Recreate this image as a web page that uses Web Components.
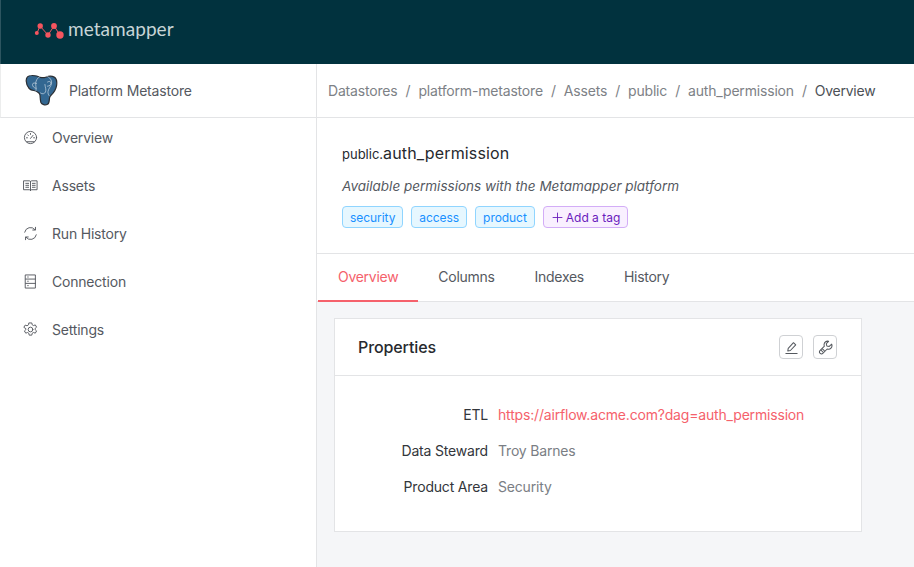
<!DOCTYPE html>
<html>
<head>
<meta charset="utf-8">
<title>Metamapper</title>
<style>
  html, body { margin: 0; height: 100%; overflow: hidden; }
  body { font-family: Inter, "Liberation Sans", sans-serif; font-size: 14px; letter-spacing: -.18px; color: #55595f; background: #fff; }
</style>
</head>
<body>
<app-shell>
  <top-bar slot="top"></top-bar>
  <side-bar slot="side">
    <nav-item label="Overview" icon="gauge"></nav-item>
    <nav-item label="Assets" icon="book"></nav-item>
    <nav-item label="Run History" icon="sync"></nav-item>
    <nav-item label="Connection" icon="list"></nav-item>
    <nav-item label="Settings" icon="gear"></nav-item>
  </side-bar>
  <bread-crumbs slot="main"></bread-crumbs>
  <asset-header slot="main"></asset-header>
  <tab-bar slot="main"></tab-bar>
  <properties-card slot="main">
    <prop-row label="ETL"><a href="#">https://airflow.acme.com?dag=auth_permission</a></prop-row>
    <prop-row label="Data Steward">Troy Barnes</prop-row>
    <prop-row label="Product Area">Security</prop-row>
  </properties-card>
</app-shell>

<script>
const icons = {
  gauge: '<circle cx="8" cy="8" r="6.500"/><path d="M8 9l2.700-3.300M3.700 8.300h1M11.300 8.300h1M8 3.700v1M5 5.200l.7.7M4 12.500h8"/>',
  book: '<path d="M1 3h5.800c.6 0 1.200.3 1.200.9 0-.6.6-.9 1.200-.9H15v9.500H9.200c-.6 0-1.200.3-1.200.9 0-.6-.6-.9-1.200-.9H1zM8 3.900v9.500M3 5.700h3M3 7.800h3M3 9.900h3M10 5.700h3M10 7.800h3M10 9.900h3"/>',
  sync: '<path d="M1.800 6.600A6.300 6.300 0 0 1 12.800 3.900M14.200 9.400A6.300 6.300 0 0 1 3.200 12.100"/><path d="M13.300 1.400v2.900h-2.900M2.700 14.600v-2.900h2.900"/>',
  list: '<path d="M2.800 1h10.400v14H2.800zM2.800 5.400h10.400M2.800 10h10.400M5 3.200h.6M5 7.700h.6M5 12.400h.6"/>',
  gear: '<circle cx="8" cy="8" r="2.500"/><path d="M6.600 1h2.800l.4 2 1.300.8 2-.7 1.400 2.400-1.600 1.400v1.200l1.600 1.400-1.400 2.400-2-.7-1.300.8-.4 2H6.600l-.4-2-1.300-.8-2 .7-1.400-2.400 1.600-1.400V7.100L.9 5.700l1.400-2.400 2 .7 1.300-.8z"/>',
  edit: '<path d="M2 14.300h12M4 11.700l.5-2.800 5.600-6 2.400 2.300-5.700 6z"/>',
  wrench: '<path d="M14.600 4.400l-2.600 2.500-2.600-.5-.6-2.500 2.500-2.500c-2.300-.7-4.600.8-4.800 3.100-.1.800 0 1.500.3 2.100l-4.700 4.700c-.8.800-.8 2 0 2.700l.3.300c.8.800 2 .8 2.700 0l4.700-4.700c3.100 1.100 6.100-1.700 4.800-5.200z"/><path d="M3.200 10.800l2 2M4.700 9.400l2 2"/>',
  plus: '<path d="M8 2.500v11M2.500 8h11"/>'
};

function svgIcon(name, size, width) {
  return `<svg width="${size}" height="${size}" viewBox="0 0 16 16" fill="none" stroke="currentColor" stroke-width="${width || 1.1}" stroke-linejoin="round" stroke-linecap="round">${icons[name]}</svg>`;
}

class BaseElement extends HTMLElement {
  render(html) {
    if (!this.shadowRoot) this.attachShadow({ mode: 'open' });
    this.shadowRoot.innerHTML = html;
  }
}

class AppShell extends BaseElement {
  connectedCallback() {
    this.render(`
      <style>
        :host { display: grid; grid-template-columns: 317px 1fr; grid-template-rows: 64px 1fr; height: 567px; width: 914px; }
        .top { grid-column: 1 / 3; }
        .side { border-right: 1px solid #e3e4e6; }
        .main { background: #f5f6f8; display: flex; flex-direction: column; min-width: 0; }
      </style>
      <div class="top"><slot name="top"></slot></div>
      <div class="side"><slot name="side"></slot></div>
      <div class="main"><slot name="main"></slot></div>
    `);
  }
}

class TopBar extends BaseElement {
  connectedCallback() {
    this.render(`
      <style>
        :host { display: flex; align-items: center; height: 64px; background: #01323e; border-left: 1px solid #2d5560; box-sizing: border-box; padding: 0 0 6px 33px; gap: 3px; }
        .word { font: 400 19px/24px Lato, sans-serif; color: #c8d5d7; letter-spacing: .05px; }
        svg { display: block; margin-top: 4px; }
      </style>
      <svg width="31" height="19" viewBox="0 0 31 19">
        <path d="M3 11L6 4L14 13L20 4L26 13" fill="none" stroke="#f5555f" stroke-width="1"/>
        <circle cx="2.800" cy="11" r="2" fill="#f5555f"/>
        <circle cx="6.200" cy="4" r="2.700" fill="#f5555f"/>
        <circle cx="14" cy="13" r="2.700" fill="#f5555f"/>
        <circle cx="20" cy="4" r="2.900" fill="#f5555f"/>
        <circle cx="26" cy="13" r="3.700" fill="#f5555f"/>
      </svg>
      <span class="word">metamapper</span>
    `);
  }
}

class SideBar extends BaseElement {
  connectedCallback() {
    this.render(`
      <style>
        :host { display: block; }
        .store { display: flex; align-items: center; gap: 11px; padding-left: 24px; border-bottom: 1px solid #e3e4e6; border-left: 1px solid #eceded; box-sizing: border-box; height: 54px; color: #55595f; }
        nav { display: flex; flex-direction: column; gap: 9px; }
      </style>
      <div class="store">
        <svg width="33" height="33" viewBox="0 0 32 33">
          <path d="M6 1.500C2.500 1.500 .6 3.500 .7 7c.1 3 1.300 5.500 3 7.500 1.200 1.400 3 1.900 4.600 2 1.500.2 3 .9 4.500 1.900.9.600 1.500 1.500 1.700 2.700.3 2.500.1 5 .9 7.400.8 2.200 4.500 3 6.600 1.800 1.700-1 1.800-3.400 1.900-5.500 0-1.500.5-2.500 1.600-3.500 2.500-2.400 5-6 5.600-10 .5-3.500-.3-7-2.400-8.200-2.500-1.300-6-.9-8.500.1-1.700.7-3.500.6-5.300.2C12 1.700 9 1.400 6 1.500z" fill="#336791" stroke="#2a2e33" stroke-width="1.200" stroke-linejoin="round"/>
          <path d="M14.500 2.500c-3 1.500-4.500 4.500-4.300 8 .1 2 .8 3.500.3 6M21 2c3.500 1.500 5.500 4 5 7.500-.4 2.800-3 5-3.500 8-.2 1.800.3 3.500 1.500 4.500M11 9.500c-1.500-1-4-.7-4 1 0 2 1.500 3.500 3.500 3.800M22 8c1.500-1 3.500-.7 3.500 1 0 2-1.500 3-3.500 3.200M15 19c2 1.500 4 .9 5-1 1-2.300-.4-5-.6-7.500" fill="none" stroke="#dfe8ee" stroke-width=".6" stroke-linecap="round"/>
        </svg>
        <span>Platform Metastore</span>
      </div>
      <nav><slot></slot></nav>
    `);
  }
}

class NavItem extends BaseElement {
  connectedCallback() {
    this.render(`
      <style>
        :host { display: flex; align-items: center; height: 39px; gap: 14px; padding-left: 23px; color: #55595f; letter-spacing: -.2px; }
        svg { display: block; flex: none; }
        span { line-height: 17px; }
      </style>
      ${svgIcon(this.getAttribute('icon'), 15, 1)}
      <span>${this.getAttribute('label')}</span>
    `);
  }
}

class BreadCrumbs extends BaseElement {
  connectedCallback() {
    const parts = ['Datastores', 'platform-metastore', 'Assets', 'public', 'auth_permission'];
    this.render(`
      <style>
        :host { display: flex; align-items: center; flex: none; height: 54px; box-sizing: border-box; padding-left: 11px; background: #fff; border-bottom: 1px solid #e3e4e6; color: #7d8186; white-space: nowrap; }
        i { font-style: normal; padding: 0 8px; }
        b { font-weight: 400; color: #4c5056; letter-spacing: -.25px; }
      </style>
      ${parts.map(p => `<span>${p}</span><i>/</i>`).join('')}<b>Overview</b>
    `);
  }
}

class AssetHeader extends BaseElement {
  connectedCallback() {
    this.render(`
      <style>
        :host { display: block; flex: none; height: 136px; box-sizing: border-box; padding: 25px 24px 0 25px; background: #fff; border-bottom: 1px solid #e3e4e6; }
        h1 { margin: 0; font-weight: 400; font-size: 16px; line-height: 20px; color: #26292e; letter-spacing: .15px; }
        h1 small { font-size: 13px; letter-spacing: 0; }
        p { margin: 12px 0 0; font-style: italic; font-size: 13.500px; letter-spacing: 0; line-height: 20px; color: #55595f; }
        .tags { display: flex; gap: 8px; margin-top: 10px; }
      </style>
      <h1><small>public.</small>auth_permission</h1>
      <p>Available permissions with the Metamapper platform</p>
      <div class="tags">
        <tag-chip>security</tag-chip>
        <tag-chip>access</tag-chip>
        <tag-chip>product</tag-chip>
        <tag-chip add>${svgIcon('plus', 13, 1.1)}Add a tag</tag-chip>
      </div>
    `);
  }
}

class TagChip extends BaseElement {
  connectedCallback() {
    this.render(`
      <style>
        :host { display: inline-flex; align-items: center; height: 22px; box-sizing: border-box; padding: 0 7px; border: 1px solid #90d5ff; border-radius: 4px; background: #e6f7ff; color: #1890ff; font-size: 12px; letter-spacing: -.06px; }
        :host([add]) { border-color: #d3adf7; background: #f9f0ff; color: #6a1bbd; gap: 2px; letter-spacing: 0; }
      </style>
      <slot></slot>
    `);
  }
}

class TabBar extends BaseElement {
  connectedCallback() {
    const tabs = ['Overview', 'Columns', 'Indexes', 'History'];
    this.render(`
      <style>
        :host { display: flex; flex: none; height: 48px; box-sizing: border-box; padding-left: 1px; background: #fff; border-bottom: 1px solid #e3e4e6; letter-spacing: -.28px; }
        div { padding: 0 20px; height: 48px; line-height: 46px; box-sizing: border-box; color: #55595f; }
        .on { color: #f5616b; border-bottom: 2px solid #f5616b; }
      </style>
      ${tabs.map((t, i) => `<div class="${i ? '' : 'on'}">${t}</div>`).join('')}
    `);
  }
}

class PropertiesCard extends BaseElement {
  connectedCallback() {
    this.render(`
      <style>
        :host { display: block; flex: none; width: 528px; height: 214px; box-sizing: border-box; margin: 16px 0 0 17px; background: #fff; border: 1px solid #e3e4e6; }
        header { display: flex; align-items: center; height: 57px; box-sizing: border-box; padding: 0 24px 0 23px; border-bottom: 1px solid #e3e4e6; }
        h2 { flex: 1; margin: 0; font-size: 16px; font-weight: 500; color: #26292e; letter-spacing: -.1px; }
        button { display: flex; align-items: center; justify-content: center; width: 24px; height: 24px; margin-left: 10px; padding: 0; background: #fff; border: 1px solid #cfd1d4; border-radius: 4px; color: #55595f; }
        .rows { display: flex; flex-direction: column; padding-top: 21px; }
      </style>
      <header>
        <h2>Properties</h2>
        <button>${svgIcon('edit', 15)}</button>
        <button>${svgIcon('wrench', 15)}</button>
      </header>
      <div class="rows"><slot></slot></div>
    `);
  }
}

class PropRow extends BaseElement {
  connectedCallback() {
    this.render(`
      <style>
        :host { display: flex; height: 36px; line-height: 36px; gap: 10px; color: #7a7e84; }
        label { flex: none; width: 153px; text-align: right; color: #33363b; }
        ::slotted(a) { color: #f5616b; text-decoration: none; }
      </style>
      <label>${this.getAttribute('label')}</label>
      <span><slot></slot></span>
    `);
  }
}

customElements.define('app-shell', AppShell);
customElements.define('top-bar', TopBar);
customElements.define('side-bar', SideBar);
customElements.define('nav-item', NavItem);
customElements.define('bread-crumbs', BreadCrumbs);
customElements.define('asset-header', AssetHeader);
customElements.define('tag-chip', TagChip);
customElements.define('tab-bar', TabBar);
customElements.define('properties-card', PropertiesCard);
customElements.define('prop-row', PropRow);
</script>
</body>
</html>
